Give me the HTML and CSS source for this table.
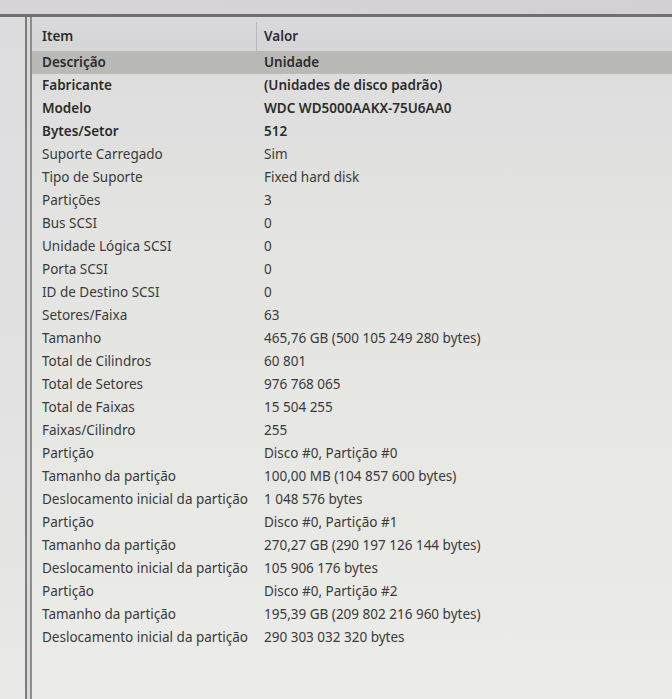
FILE: index.html
```html
<!DOCTYPE html>
<html lang="pt">
<head>
<meta charset="utf-8">
<link rel="stylesheet" href="styles.css">
</head>
<body>
<div class="screen">
  <div class="topbar"></div>
  <div class="main">
    <div class="sidebar"></div>
    <div class="spacer"></div>
    <div class="table">
      <div class="head">
        <div class="cell item">Item</div>
        <div class="cell value">Valor</div>
      </div>
      <div class="row selected"><div class="cell item">Descrição</div><div class="cell value">Unidade</div></div>
      <div class="row"><div class="cell item">Fabricante</div><div class="cell value">(Unidades de disco padrão)</div></div>
      <div class="row"><div class="cell item">Modelo</div><div class="cell value">WDC WD5000AAKX-75U6AA0</div></div>
      <div class="row"><div class="cell item">Bytes/Setor</div><div class="cell value">512</div></div>
      <div class="row"><div class="cell item">Suporte Carregado</div><div class="cell value">Sim</div></div>
      <div class="row"><div class="cell item">Tipo de Suporte</div><div class="cell value">Fixed hard disk</div></div>
      <div class="row"><div class="cell item">Partições</div><div class="cell value">3</div></div>
      <div class="row"><div class="cell item">Bus SCSI</div><div class="cell value">0</div></div>
      <div class="row"><div class="cell item">Unidade Lógica SCSI</div><div class="cell value">0</div></div>
      <div class="row"><div class="cell item">Porta SCSI</div><div class="cell value">0</div></div>
      <div class="row"><div class="cell item">ID de Destino SCSI</div><div class="cell value">0</div></div>
      <div class="row"><div class="cell item">Setores/Faixa</div><div class="cell value">63</div></div>
      <div class="row"><div class="cell item">Tamanho</div><div class="cell value">465,76 GB (500 105 249 280 bytes)</div></div>
      <div class="row"><div class="cell item">Total de Cilindros</div><div class="cell value">60 801</div></div>
      <div class="row"><div class="cell item">Total de Setores</div><div class="cell value">976 768 065</div></div>
      <div class="row"><div class="cell item">Total de Faixas</div><div class="cell value">15 504 255</div></div>
      <div class="row"><div class="cell item">Faixas/Cilindro</div><div class="cell value">255</div></div>
      <div class="row"><div class="cell item">Partição</div><div class="cell value">Disco #0, Partição #0</div></div>
      <div class="row"><div class="cell item">Tamanho da partição</div><div class="cell value">100,00 MB (104 857 600 bytes)</div></div>
      <div class="row"><div class="cell item">Deslocamento inicial da partição</div><div class="cell value">1 048 576 bytes</div></div>
      <div class="row"><div class="cell item">Partição</div><div class="cell value">Disco #0, Partição #1</div></div>
      <div class="row"><div class="cell item">Tamanho da partição</div><div class="cell value">270,27 GB (290 197 126 144 bytes)</div></div>
      <div class="row"><div class="cell item">Deslocamento inicial da partição</div><div class="cell value">105 906 176 bytes</div></div>
      <div class="row"><div class="cell item">Partição</div><div class="cell value">Disco #0, Partição #2</div></div>
      <div class="row"><div class="cell item">Tamanho da partição</div><div class="cell value">195,39 GB (209 802 216 960 bytes)</div></div>
      <div class="row"><div class="cell item">Deslocamento inicial da partição</div><div class="cell value">290 303 032 320 bytes</div></div>
    </div>
  </div>
</div>
</body>
</html>
```
FILE: styles.css
```css
html, body {
  margin: 0;
  padding: 0;
}
body {
  width: 672px;
  height: 699px;
  overflow: hidden;
  background: #e6e6e4;
  font-family: "Noto Sans", "Open Sans", sans-serif;
}
.screen {
  display: flex;
  flex-direction: column;
  width: 672px;
  height: 699px;
}
.topbar {
  height: 14px;
  background: linear-gradient(to right, #d7d5d9, #d2d0d4);
  border-bottom: 3px solid #6f6f6f;
  flex: none;
}
.main {
  flex: 1;
  display: flex;
  min-height: 0;
}
.sidebar {
  width: 25px;
  background: linear-gradient(to bottom, #dcdbde, #e8e8e6);
  border-right: 2px solid #7c7c7c;
  flex: none;
}
.spacer {
  width: 3px;
  background: #d9d9d9;
  border-right: 2px solid #8e8e8e;
  flex: none;
}
.table {
  flex: 1;
  background: linear-gradient(to bottom, #dcdbdd 0%, #e3e3e1 30%, #e8e8e5 70%, #ebebe9 100%);
  display: flex;
  flex-direction: column;
}
.head, .row {
  display: grid;
  grid-template-columns: 225px 1fr;
}
.head {
  height: 34px;
  background: linear-gradient(to bottom, #d9d8dc, #d6d5d8);
  font-weight: 600;
  color: #2e2e2e;
}
.head .cell {
  display: flex;
  align-items: center;
  padding-top: 4px;
}
.head .item {
  border-right: 1px solid #b9b9bb;
  margin-top: 5px;
  padding-top: 0;
}
.row {
  height: 23px;
  align-items: center;
  color: #3a3a3a;
}
.row.selected {
  background: #b9b9b5;
  color: #262626;
  font-weight: 600;
}
.row:nth-child(-n+5) {
  font-weight: 600;
  color: #2c2c2c;
}
.cell {
  font-size: 13.5px;
  white-space: nowrap;
  line-height: 23px;
}
.item {
  padding-left: 10px;
}
.value {
  padding-left: 7px;
}
```
